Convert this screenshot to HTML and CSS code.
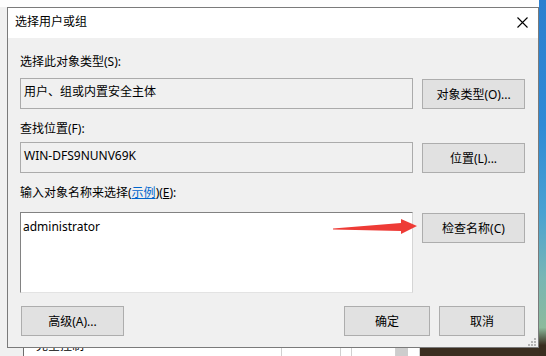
FILE: index.html
```html
<!DOCTYPE html>
<html lang="zh-CN">
<head>
    <meta charset="UTF-8">
    <title>选择用户或组</title>
    <link rel="stylesheet" href="styles.css">
</head>
<body>
    <div class="desktop">
        <div class="top-strip"></div>
        <div class="left-strip"></div>
        <div class="dialog">
            <div class="titlebar">
                <span class="title">选择用户或组</span>
                <svg class="close" width="11" height="11" viewBox="0 0 11 11">
                    <path d="M0.5 0.5 L10.5 10.5 M10.5 0.5 L0.5 10.5" stroke="#000" stroke-width="1.1" fill="none"/>
                </svg>
            </div>
            <div class="content">
                <div class="label label-first">选择此对象类型(S):</div>
                <div class="row">
                    <div class="field readonly">用户、组或内置安全主体</div>
                    <button class="btn side">对象类型(O)...</button>
                </div>
                <div class="label label-second">查找位置(F):</div>
                <div class="row">
                    <div class="field readonly">WIN-DFS9NUNV69K</div>
                    <button class="btn side">位置(L)...</button>
                </div>
                <div class="label label-third">输入对象名称来选择(<a class="link" href="#">示例</a>)(<u>E</u>):</div>
                <div class="row">
                    <div class="field names">administrator</div>
                    <button class="btn side">检查名称(C)</button>
                </div>
                <div class="footer">
                    <button class="btn advanced">高级(A)...</button>
                    <div class="spacer"></div>
                    <button class="btn small">确定</button>
                    <button class="btn small">取消</button>
                </div>
            </div>
            <!-- red annotation arrow over the dialog -->
            <svg class="arrow" width="90" height="20" viewBox="0 0 90 20">
                <polygon points="0,9.5 68,4 68,0 84,7 68,15 68,12 0,10.5" fill="#ee3b36"/>
            </svg>
            <svg class="grip" width="8" height="8" viewBox="0 0 8 8">
                <rect x="6" y="0" width="2" height="2" fill="#b4b4b4"/>
                <rect x="3" y="3" width="2" height="2" fill="#b4b4b4"/>
                <rect x="6" y="3" width="2" height="2" fill="#b4b4b4"/>
                <rect x="0" y="6" width="2" height="2" fill="#b4b4b4"/>
                <rect x="3" y="6" width="2" height="2" fill="#b4b4b4"/>
                <rect x="6" y="6" width="2" height="2" fill="#b4b4b4"/>
            </svg>
        </div>
        <div class="right-strip"></div>
        <div class="bottom-strip">
            <div class="under-gray"></div>
            <div class="under-list">
                <div class="under-cell first"><span class="under-text">完全控制</span></div>
                <div class="under-cell c2"></div>
                <div class="under-cell c3"></div>
                <div class="under-cell c4"></div>
                <div class="under-cell c5"><div class="under-scroll"></div></div>
            </div>
            <div class="under-photo"></div>
        </div>
    </div>
</body>
</html>
```

FILE: styles.css
```css
body {
    margin: 0;
    padding: 0;
    font-family: "Noto Sans", "Noto Sans CJK SC", sans-serif;
    font-size: 12px;
    color: #000;
    overflow: hidden;
}

.desktop {
    display: grid;
    grid-template-columns: 7px 532px 7px;
    grid-template-rows: 7px 341px 8px;
    width: 546px;
    height: 356px;
}

.top-strip {
    grid-column: 1 / 3;
    grid-row: 1;
    background-color: #fdfdfd;
}

.left-strip {
    grid-column: 1;
    grid-row: 2;
    background-color: #f0f0f0;
}

.right-strip {
    grid-column: 3;
    grid-row: 1 / 4;
    background: linear-gradient(#2b7fcf 0%, #2f8ad6 35%, #4aa2d2 60%, #78b6b4 78%, #8cba9c 92%, #3a2d1f 97%);
}

/* dialog window */
.dialog {
    grid-column: 2;
    grid-row: 2;
    position: relative;
    border: 1px solid #7a7a7a;
    background-color: #f0f0f0;
    display: flex;
    flex-direction: column;
}

.titlebar {
    height: 30px;
    background-color: #fff;
    display: flex;
    align-items: center;
    justify-content: space-between;
    padding: 0 10px 0 7px;
}

.title {
    line-height: 28px;
    padding-bottom: 2px;
}

.close {
    display: block;
    margin-bottom: 1px;
}

.content {
    padding: 0 13px 0 12px;
    display: flex;
    flex-direction: column;
}

.label {
    line-height: 16px;
    white-space: nowrap;
}

.label-first {
    margin-top: 16px;
    margin-bottom: 8px;
}

.label-second {
    margin-top: 12px;
    margin-bottom: 5px;
}

.label-third {
    margin-top: 12px;
    margin-bottom: 11px;
}

.link {
    color: #0066cc;
    text-decoration: underline;
}

.row {
    display: flex;
    align-items: flex-start;
    gap: 9px;
}

.field {
    box-sizing: border-box;
    width: 393px;
    height: 31px;
    padding: 4px 3px 0 3px;
    line-height: 18px;
    white-space: nowrap;
}

.readonly {
    background-color: #f0f0f0;
    border: 1px solid #ababab;
}

.names {
    height: 81px;
    padding-top: 6px;
    line-height: 16px;
    padding-left: 2px;
    background-color: #fff;
    border: 1px solid;
    border-color: #828282 #d5d5d5 #e3e3e3 #828282;
}

.btn {
    box-sizing: border-box;
    height: 30px;
    background-color: #e1e1e1;
    border: 1px solid #adadad;
    font-family: "Noto Sans", "Noto Sans CJK SC", sans-serif;
    font-size: 12px;
    color: #000;
    padding: 0;
    white-space: nowrap;
}

.side {
    width: 103px;
    margin-top: 1px;
}

.footer {
    display: flex;
    gap: 9px;
    margin-top: 13px;
}

.advanced {
    width: 103px;
    margin-left: 1px;
}

.spacer {
    flex: 1;
}

.small {
    width: 86px;
}

.arrow {
    position: absolute;
    left: 325px;
    top: 211px;
}

.grip {
    position: absolute;
    right: 2px;
    bottom: 1px;
}

/* the window lying under the dialog */
.bottom-strip {
    grid-column: 1 / 3;
    grid-row: 3;
    display: flex;
    overflow: hidden;
    background-color: #fff;
}

.under-gray {
    width: 23px;
    background-color: #f0f0f0;
    border-right: 1px solid #6e6e6e;
}

.under-list {
    display: flex;
    width: 396px;
}

.under-cell {
    border-right: 1px solid #d0d0d0;
    overflow: hidden;
}

.first {
    width: 258px;
    padding-left: 12px;
    box-sizing: border-box;
}

.under-text {
    display: block;
    line-height: 16px;
    margin-top: -10px;
}

.c2 {
    width: 58px;
}

.c3 {
    width: 10px;
}

.c4 {
    width: 43px;
}

.c5 {
    flex: 1;
}

.under-scroll {
    width: 12px;
    height: 8px;
    background-color: #cdcdcd;
}

.under-photo {
    flex: 1;
    background-color: #3b2e20;
}
```
